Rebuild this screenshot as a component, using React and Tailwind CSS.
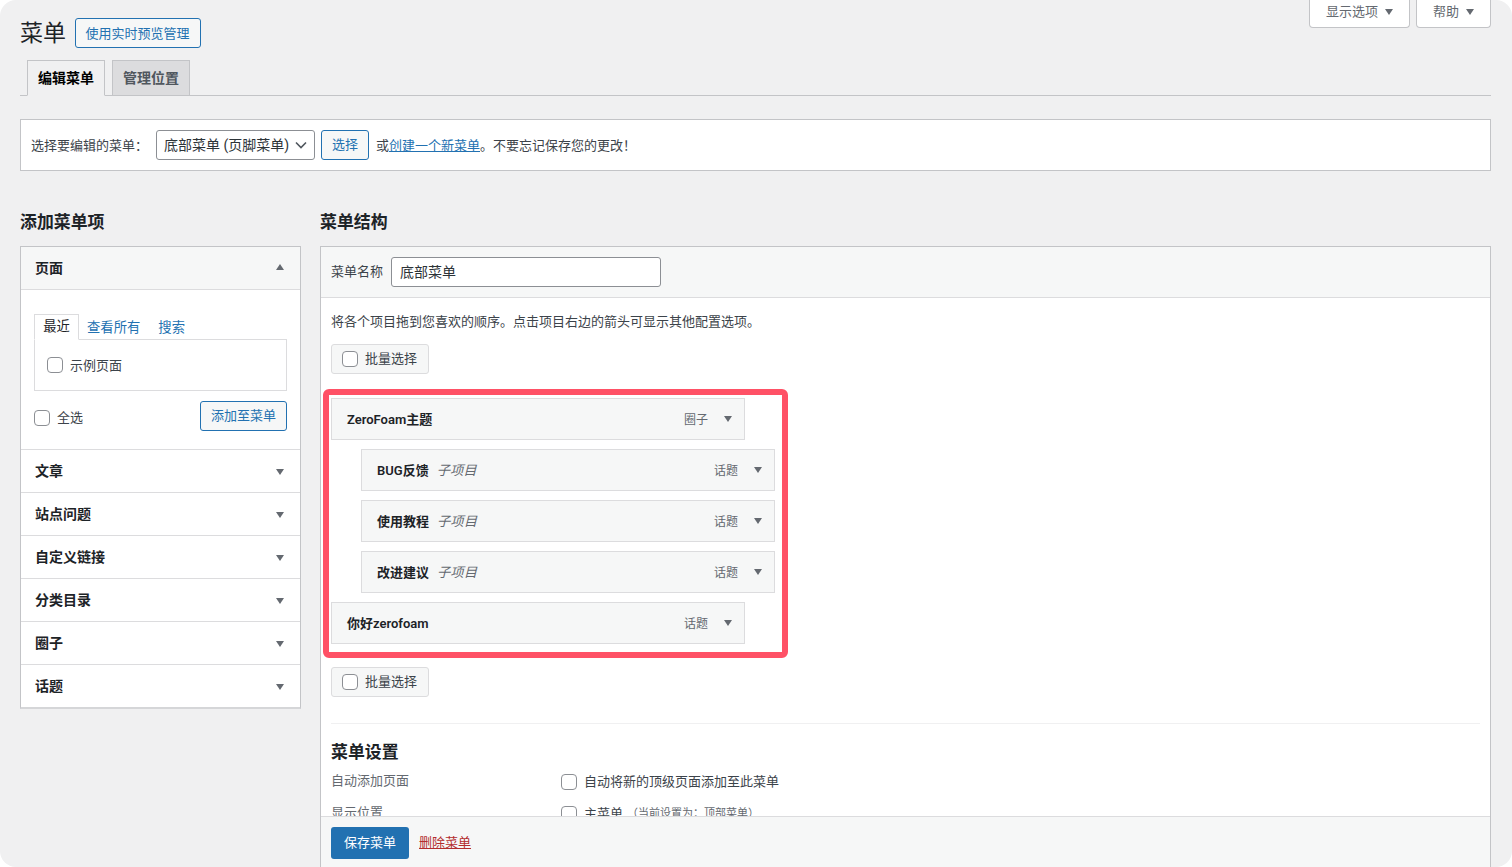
const Tri = ({ up = false, className = "" }) => (
  <svg width="8" height="6" viewBox="0 0 8 6" className={className}>
    <polygon points={up ? "4,0 8,6 0,6" : "0,0 8,0 4,6"} fill="#646970" />
  </svg>
);

const Check = ({ className = "" }) => (
  <input
    type="checkbox"
    className={"appearance-none block w-4 h-4 bg-white border border-[#8c8f94] rounded-[4px] shrink-0 " + className}
  />
);

const OutlineBtn = ({ children, className = "" }) => (
  <button className={"h-[30px] border border-[#2271b1] rounded-[3px] bg-[#f6f7f7] text-[#2271b1] text-[13px] flex items-center justify-center " + className}>
    {children}
  </button>
);

const BulkBtn = () => (
  <div className="w-[98px] h-[30px] border border-[#dcdcde] rounded-[3px] bg-[#f6f7f7] flex items-center pl-[10px] gap-[7px]">
    <Check />
    <span>批量选择</span>
  </div>
);

const Accordion = ({ title }) => (
  <div className="h-[43px] border-t border-[#dcdcde] flex items-center justify-between pl-[14px] pr-[16px]">
    <span className="font-semibold text-[14px] text-[#1d2327] mt-[1px]">{title}</span>
    <Tri className="mt-[2px]" />
  </div>
);

const MenuItem = ({ title, type, sub = false }) => (
  <div className={"h-[42px] border border-[#dcdcde] bg-[#f6f7f7] flex items-center pl-[15px] pr-[12px] w-[414px] " + (sub ? "ml-[30px]" : "")}>
    <span className="font-semibold text-[#1d2327] mt-[2px]">{title}</span>
    {sub && <span className="italic text-[13.33px] text-[#646970] ml-[8px] mt-[2px]">子项目</span>}
    <span className="ml-auto text-[#646970] text-[12px] mr-[16px] mt-[1px]">{type}</span>
    <Tri className="mb-[1px]" />
  </div>
);

export default function App() {
  return (
    <div className="bg-white h-[867px] overflow-hidden text-[13px] text-[#3c434a] font-['Roboto','Noto_Sans_CJK_SC',sans-serif]">
      <div className="h-full bg-[#f0f0f1] rounded-2xl pl-5 pr-[21px] flex flex-col overflow-hidden">
        <div className="flex justify-between items-start h-[60px]">
          <div className="flex items-start gap-[9px] mt-[18px]">
            <h1 className="text-[23px] leading-[30px] text-[#1d2327] pt-[1px]">菜单</h1>
            <OutlineBtn className="w-[126px] pr-[1px] pt-[1px]">使用实时预览管理</OutlineBtn>
          </div>
          <div className="flex gap-[6px]">
            <div className="w-[101px] h-[28px] pb-[4px] bg-white border border-t-0 border-[#c3c4c7] rounded-b-[4px] flex items-center justify-center gap-[7px] text-[#646970]">
              显示选项 <Tri />
            </div>
            <div className="w-[75px] h-[28px] pb-[4px] bg-white border border-t-0 border-[#c3c4c7] rounded-b-[4px] flex items-center justify-center gap-[7px] text-[#646970]">
              帮助 <Tri />
            </div>
          </div>
        </div>

        <div className="h-9 border-b border-[#c3c4c7] flex items-end pl-[7px] gap-[7px]">
          <div className="w-[78px] h-9 -mb-px bg-[#f0f0f1] border border-[#c3c4c7] border-b-[#f0f0f1] flex items-center justify-center font-semibold text-[14px] text-black">编辑菜单</div>
          <div className="w-[78px] h-9 -mb-px bg-[#dcdcde] border border-[#c3c4c7] flex items-center justify-center font-semibold text-[14px] text-[#50575e]">管理位置</div>
        </div>

        <div className="mt-[23px] h-[52px] bg-white border border-[#c3c4c7] flex items-center pl-[10px] shrink-0">
          <span className="w-[125px] mt-[1px]">选择要编辑的菜单：</span>
          <div className="w-[159px] h-[30px] border border-[#8c8f94] rounded-[3px] bg-white flex items-center justify-between pl-[7px] pr-[7px] text-[14px] text-[#2c3338]">
            <span>底部菜单 (页脚菜单)</span>
            <svg width="12" height="8" viewBox="0 0 12 8"><path d="M1 1.5l5 5 5-5" fill="none" stroke="#50575e" strokeWidth="1.6" /></svg>
          </div>
          <OutlineBtn className="w-[48px] ml-[6px]">选择</OutlineBtn>
          <span className="ml-[7px] mt-[1px]">或<a className="text-[#2271b1] underline">创建一个新菜单</a>。不要忘记保存您的更改！</span>
        </div>

        <div className="flex gap-[19px] mt-[37px] flex-1 min-h-0">
          <div className="w-[281px] shrink-0">
            <h2 className="text-[16.9px] leading-[24px] font-semibold text-[#1d2327] mt-[2px] mb-[12px]">添加菜单项</h2>
            <div className="bg-white border border-[#c3c4c7] border-b-2 border-b-[#d5d6d8]">
              <div className="h-[43px] bg-[#f6f7f7] border-b border-[#dcdcde] flex items-center justify-between pl-[14px] pr-[16px]">
                <span className="font-semibold text-[14px] text-[#1d2327]">页面</span>
                <Tri up className="mb-[2px]" />
              </div>
              <div className="px-[13px] pt-[24px] pb-[18px]">
                <div className="flex h-[26px] items-stretch relative z-10 text-[13.33px]">
                  <div className="w-[45px] border border-[#dcdcde] border-b-white bg-white flex items-center justify-center text-[#1d2327] h-[26px]">最近</div>
                  <span className="text-[#2271b1] ml-2 mt-[4px]">查看所有</span>
                  <span className="text-[#2271b1] ml-[18px] mt-[4px]">搜索</span>
                </div>
                <div className="-mt-px h-[52px] border border-[#dcdcde] flex items-center pl-[12px] gap-[7px]">
                  <Check />
                  <span className="mt-[2px]">示例页面</span>
                </div>
                <div className="flex items-center justify-between mt-[10px]">
                  <div className="flex items-center gap-[7px] mt-[3px]">
                    <Check />
                    <span className="mt-[1px]">全选</span>
                  </div>
                  <OutlineBtn className="w-[87px]">添加至菜单</OutlineBtn>
                </div>
              </div>
              <Accordion title="文章" />
              <Accordion title="站点问题" />
              <Accordion title="自定义链接" />
              <Accordion title="分类目录" />
              <Accordion title="圈子" />
              <Accordion title="话题" />
            </div>
          </div>

          <div className="flex-1 min-w-0 flex flex-col">
            <h2 className="text-[16.9px] leading-[24px] font-semibold text-[#1d2327] mt-[2px] mb-[12px]">菜单结构</h2>
            <div className="flex-1 min-h-0 flex flex-col border border-[#c3c4c7] border-b-0 bg-white">
              <div className="h-[51px] shrink-0 bg-[#f6f7f7] border-b border-[#dcdcde] flex items-center pl-[10px] gap-2">
                <span>菜单名称</span>
                <div className="w-[270px] h-[30px] bg-white border border-[#8c8f94] rounded-[3px] flex items-center pl-2 text-[14px] text-[#2c3338]">底部菜单</div>
              </div>
              <div className="flex-1 min-h-0 overflow-hidden px-[10px] pt-[14px]">
                <p className="leading-[20px]">将各个项目拖到您喜欢的顺序。点击项目右边的箭头可显示其他配置选项。</p>
                <div className="mt-[12px]"><BulkBtn /></div>
                <div className="-ml-2 mt-[15px] w-[465px] h-[269px] border-[6px] border-[#ff5166] rounded-[6px] pt-[3px] pl-[2px] flex flex-col gap-[9px]">
                  <MenuItem title="ZeroFoam主题" type="圈子" />
                  <MenuItem sub title="BUG反馈" type="话题" />
                  <MenuItem sub title="使用教程" type="话题" />
                  <MenuItem sub title="改进建议" type="话题" />
                  <MenuItem title="你好zerofoam" type="话题" />
                </div>
                <div className="mt-[9px]"><BulkBtn /></div>
                <div className="mt-[26px] border-t border-[#f0f0f1]" />
                <h3 className="text-[16.9px] leading-[24px] font-semibold text-[#1d2327] mt-[16px]">菜单设置</h3>
                <div className="flex mt-[7px] h-[32px]">
                  <span className="w-[230px] text-[#646970] leading-[20px] h-[20px]">自动添加页面</span>
                  <div className="flex items-center gap-[7px] h-[20px] mt-[1px]"><Check /><span>自动将新的顶级页面添加至此菜单</span></div>
                </div>
                <div className="flex">
                  <span className="w-[230px] text-[#646970] leading-[20px]">显示位置</span>
                  <div className="flex items-center gap-[7px] h-[20px] mt-[1px]">
                    <Check /><span>主菜单</span><span className="text-[#646970] text-[11px] -ml-[3px]">（当前设置为：顶部菜单）</span>
                  </div>
                </div>
              </div>
              <div className="h-[51px] shrink-0 bg-[#f6f7f7] border-t border-[#dcdcde] flex items-center pl-[10px] gap-[10px]">
                <button className="w-[78px] h-[32px] pt-[1px] bg-[#2271b1] rounded-[3px] text-white mt-[1px]">保存菜单</button>
                <a className="text-[#b32d2e] underline mt-[2px]">删除菜单</a>
              </div>
            </div>
          </div>
        </div>
      </div>
    </div>
  );
}
